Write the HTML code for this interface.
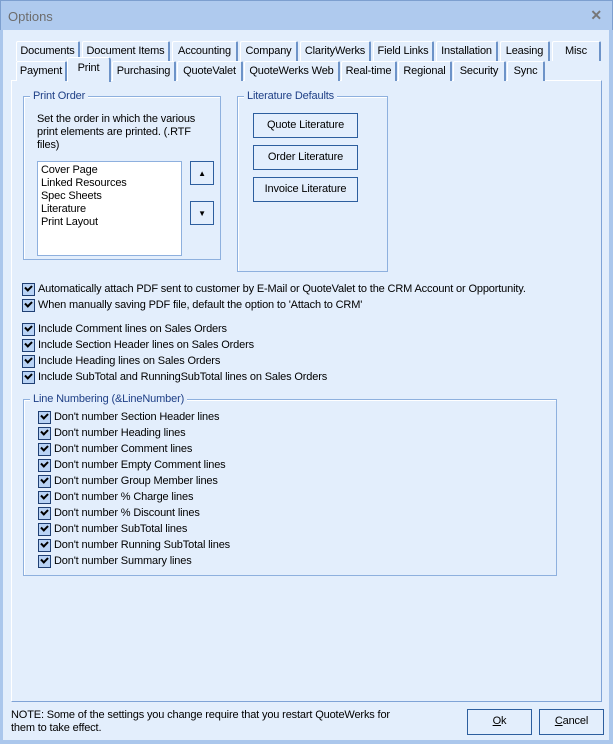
<!DOCTYPE html>
<html><head><meta charset="utf-8"><style>
*{box-sizing:border-box;margin:0;padding:0}
body{width:613px;height:744px;overflow:hidden;background:#abc7ec;font-family:"Liberation Sans",sans-serif;font-size:11px;letter-spacing:-0.15px;color:#000;position:relative}
.a{position:absolute}
#title{left:0;top:0;width:613px;height:30px;background:#afcaee;border:1px solid #7d9fcf;border-bottom:none}
#title span{position:absolute;left:7px;top:8px;font-size:13px;color:#6d6d6d;letter-spacing:0}
#title b{position:absolute;right:10px;top:6px;font-size:14px;color:#777}
#client{left:3px;top:30px;width:606px;height:710px;background:#e3eefc}
.tab{position:absolute;height:20px;border-top:1px solid #fff;border-left:1px solid #fff;border-right:2px solid #6d93c8;background:#e3eefc;text-align:center;line-height:19px;border-radius:2px 2px 0 0;white-space:nowrap}
#panel{left:11px;top:80px;width:591px;height:622px;border:1px solid #fff;border-right:1px solid #7fa3d6;border-bottom:1px solid #7fa3d6}
.grp{position:absolute;border:1px solid #8eb0de;box-shadow:inset 1px 1px 0 #fff}
.grp .l{position:absolute;top:-8px;left:6px;background:#e3eefc;color:#1e3f86;padding:0 3px;line-height:14px}
.btn{position:absolute;border:1px solid #2d5e9e;background:#e3eefc;text-align:center;line-height:23px}
.cb{position:absolute;height:16px;line-height:15px;white-space:nowrap;padding-left:16px}
.cb:before{content:"";position:absolute;left:0;top:1px;width:11px;height:11px;border:1px solid #1f3f73;background:#b9d3f5}
.cb:after{content:"";position:absolute;left:3px;top:3px;width:5px;height:3px;border-left:2px solid #000;border-bottom:2px solid #000;transform:rotate(-45deg)}
</style></head><body>
<div id="title" class="a"><span>Options</span><b>✕</b></div>
<div id="client" class="a"></div>
<div id="panel" class="a"></div>

<div class="tab" style="left:16px;top:41px;width:64px">Documents</div>
<div class="tab" style="left:82px;top:41px;width:88px">Document Items</div>
<div class="tab" style="left:172px;top:41px;width:66px">Accounting</div>
<div class="tab" style="left:240px;top:41px;width:58px">Company</div>
<div class="tab" style="left:300px;top:41px;width:71px">ClarityWerks</div>
<div class="tab" style="left:373px;top:41px;width:61px">Field Links</div>
<div class="tab" style="left:436px;top:41px;width:62px">Installation</div>
<div class="tab" style="left:500px;top:41px;width:50px">Leasing</div>
<div class="tab" style="left:552px;top:41px;width:49px">Misc</div>

<div class="tab" style="left:16px;top:61px;width:51px">Payment</div>
<div class="tab" style="left:112px;top:61px;width:64px">Purchasing</div>
<div class="tab" style="left:177px;top:61px;width:66px">QuoteValet</div>
<div class="tab" style="left:244px;top:61px;width:96px">QuoteWerks Web</div>
<div class="tab" style="left:341px;top:61px;width:56px">Real-time</div>
<div class="tab" style="left:398px;top:61px;width:54px">Regional</div>
<div class="tab" style="left:453px;top:61px;width:53px">Security</div>
<div class="tab" style="left:507px;top:61px;width:38px">Sync</div>
<div class="tab" style="left:67px;top:57px;width:44px;height:25px;border-radius:3px 3px 0 0;line-height:20px;z-index:2">Print</div>

<div class="grp" style="left:23px;top:96px;width:198px;height:164px"><span class="l">Print Order</span></div>
<div class="a" style="left:37px;top:113px;width:175px;line-height:13px">Set the order in which the various print elements are printed. (.RTF files)</div>
<div class="a" style="left:37px;top:161px;width:145px;height:95px;background:#fff;border:1px solid #8eb0de;padding:2px 3px;line-height:13px">Cover Page<br>Linked Resources<br>Spec Sheets<br>Literature<br>Print Layout</div>
<div class="btn" style="left:190px;top:161px;width:24px;height:24px;font-size:8px">▲</div>
<div class="btn" style="left:190px;top:201px;width:24px;height:24px;font-size:8px">▼</div>

<div class="grp" style="left:237px;top:96px;width:151px;height:176px"><span class="l">Literature Defaults</span></div>
<div class="btn" style="left:253px;top:113px;width:105px;height:25px">Quote Literature</div>
<div class="btn" style="left:253px;top:145px;width:105px;height:25px">Order Literature</div>
<div class="btn" style="left:253px;top:177px;width:105px;height:25px">Invoice Literature</div>

<div class="cb" style="left:22px;top:282px">Automatically attach PDF sent to customer by E-Mail or QuoteValet to the CRM Account or Opportunity.</div>
<div class="cb" style="left:22px;top:298px">When manually saving PDF file, default the option to 'Attach to CRM'</div>
<div class="cb" style="left:22px;top:322px">Include Comment lines on Sales Orders</div>
<div class="cb" style="left:22px;top:338px">Include Section Header lines on Sales Orders</div>
<div class="cb" style="left:22px;top:354px">Include Heading lines on Sales Orders</div>
<div class="cb" style="left:22px;top:370px">Include SubTotal and RunningSubTotal lines on Sales Orders</div>

<div class="grp" style="left:23px;top:399px;width:534px;height:177px"><span class="l">Line Numbering (&amp;LineNumber)</span></div>
<div class="cb" style="left:38px;top:410px">Don't number Section Header lines</div>
<div class="cb" style="left:38px;top:426px">Don't number Heading lines</div>
<div class="cb" style="left:38px;top:442px">Don't number Comment lines</div>
<div class="cb" style="left:38px;top:458px">Don't number Empty Comment lines</div>
<div class="cb" style="left:38px;top:474px">Don't number Group Member lines</div>
<div class="cb" style="left:38px;top:490px">Don't number % Charge lines</div>
<div class="cb" style="left:38px;top:506px">Don't number % Discount lines</div>
<div class="cb" style="left:38px;top:522px">Don't number SubTotal lines</div>
<div class="cb" style="left:38px;top:538px">Don't number Running SubTotal lines</div>
<div class="cb" style="left:38px;top:554px">Don't number Summary lines</div>

<div class="a" style="left:11px;top:709px;width:400px;line-height:13px">NOTE: Some of the settings you change require that you restart QuoteWerks for them to take effect.</div>
<div class="btn" style="left:467px;top:709px;width:65px;height:26px"><u>O</u>k</div>
<div class="btn" style="left:539px;top:709px;width:65px;height:26px"><u>C</u>ancel</div>
</body></html>
